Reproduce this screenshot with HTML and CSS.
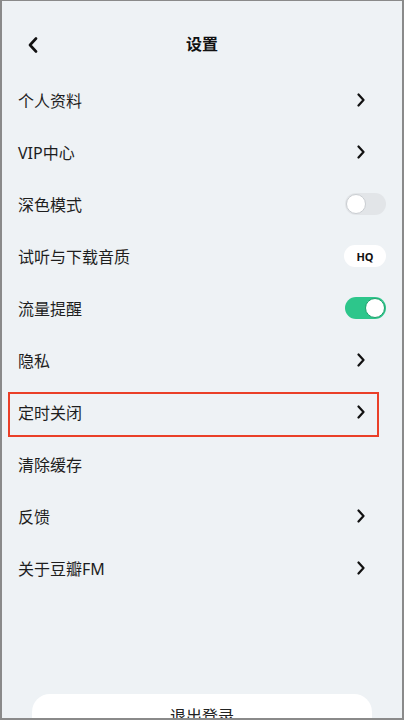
FILE: index.html
```html
<!DOCTYPE html>
<html lang="zh-CN">
<head>
    <meta charset="UTF-8">
    <meta name="viewport" content="width=device-width, initial-scale=1.0">
    <title>设置</title>
    <link rel="stylesheet" href="styles.css">
</head>
<body>
    <div class="screen">
        <div class="header">
            <span class="back">
                <svg width="12" height="16" viewBox="0 0 12 16"><path d="M9 1.5 L3 8 L9 14.5" fill="none" stroke="#111" stroke-width="2.6" stroke-linecap="round" stroke-linejoin="round"/></svg>
            </span>
            <h1>设置</h1>
        </div>

        <div class="list">
            <div class="row"><span>个人资料</span><span class="arrow"><svg width="10" height="14" viewBox="0 0 10 14"><path d="M2.5 1.5 L7.5 7 L2.5 12.5" fill="none" stroke="#111" stroke-width="2.2" stroke-linecap="round" stroke-linejoin="round"/></svg></span></div>
            <div class="row"><span>VIP中心</span><span class="arrow"><svg width="10" height="14" viewBox="0 0 10 14"><path d="M2.5 1.5 L7.5 7 L2.5 12.5" fill="none" stroke="#111" stroke-width="2.2" stroke-linecap="round" stroke-linejoin="round"/></svg></span></div>
            <div class="row"><span>深色模式</span><span class="toggle"><span class="knob"></span></span></div>
            <div class="row"><span>试听与下载音质</span><span class="pill">HQ</span></div>
            <div class="row"><span>流量提醒</span><span class="toggle on"><span class="knob"></span></span></div>
            <div class="row"><span>隐私</span><span class="arrow"><svg width="10" height="14" viewBox="0 0 10 14"><path d="M2.5 1.5 L7.5 7 L2.5 12.5" fill="none" stroke="#111" stroke-width="2.2" stroke-linecap="round" stroke-linejoin="round"/></svg></span></div>
            <div class="row marked"><span>定时关闭</span><span class="arrow"><svg width="10" height="14" viewBox="0 0 10 14"><path d="M2.5 1.5 L7.5 7 L2.5 12.5" fill="none" stroke="#111" stroke-width="2.2" stroke-linecap="round" stroke-linejoin="round"/></svg></span></div>
            <div class="row"><span>清除缓存</span></div>
            <div class="row"><span>反馈</span><span class="arrow"><svg width="10" height="14" viewBox="0 0 10 14"><path d="M2.5 1.5 L7.5 7 L2.5 12.5" fill="none" stroke="#111" stroke-width="2.2" stroke-linecap="round" stroke-linejoin="round"/></svg></span></div>
            <div class="row"><span>关于豆瓣FM</span><span class="arrow"><svg width="10" height="14" viewBox="0 0 10 14"><path d="M2.5 1.5 L7.5 7 L2.5 12.5" fill="none" stroke="#111" stroke-width="2.2" stroke-linecap="round" stroke-linejoin="round"/></svg></span></div>
        </div>

        <div class="logout">退出登录</div>
    </div>
</body>
</html>
```

FILE: styles.css
```css
body {
    margin: 0;
    font-family: "Noto Sans", "Noto Sans CJK SC", sans-serif;
    background: #eef2f5;
}
.screen {
    width: 404px;
    height: 720px;
    box-sizing: border-box;
    border: 2px solid #8a8a8a;
    border-top-width: 1px;
    background: #eef2f5;
    overflow: hidden;
    color: #222;
}
.header {
    position: relative;
    height: 73px;
    display: flex;
    justify-content: center;
    align-items: flex-start;
}
.header h1 {
    margin: 0;
    padding-top: 31px;
    font-size: 16px;
    line-height: 24px;
    font-weight: bold;
    color: #111;
}
.back {
    position: absolute;
    left: 25px;
    top: 36px;
    display: flex;
}
.row {
    position: relative;
    height: 52px;
    display: flex;
    align-items: center;
    justify-content: space-between;
    padding: 0 16px;
    font-size: 16px;
    color: #1e1e1e;
}
.arrow {
    display: flex;
    margin-right: 20px;
}
.toggle {
    width: 41px;
    height: 22px;
    border-radius: 11px;
    background: #e2e5e8;
    position: relative;
}
.toggle .knob {
    position: absolute;
    left: 1px;
    top: 1px;
    width: 18px;
    height: 18px;
    border-radius: 50%;
    background: #fff;
    border: 1px solid #c9cdd1;
}
.toggle.on {
    background: #2dc68b;
}
.toggle.on .knob {
    left: auto;
    right: 1px;
    border-color: #1fa06c;
}
.pill {
    width: 42px;
    height: 22px;
    border-radius: 11px;
    background: #fff;
    font-size: 11px;
    font-weight: bold;
    color: #111;
    display: flex;
    align-items: center;
    justify-content: center;
}
.marked::after {
    content: "";
    position: absolute;
    left: 6px;
    right: 23px;
    top: 6px;
    bottom: 1px;
    border: 2.5px solid #ea3f28;
}
.logout {
    margin: 100px 30px 0;
    height: 50px;
    border-radius: 18px;
    background: #fff;
    text-align: center;
    font-size: 16px;
    line-height: 22px;
    padding-top: 11px;
    box-sizing: border-box;
    color: #222;
}
```
